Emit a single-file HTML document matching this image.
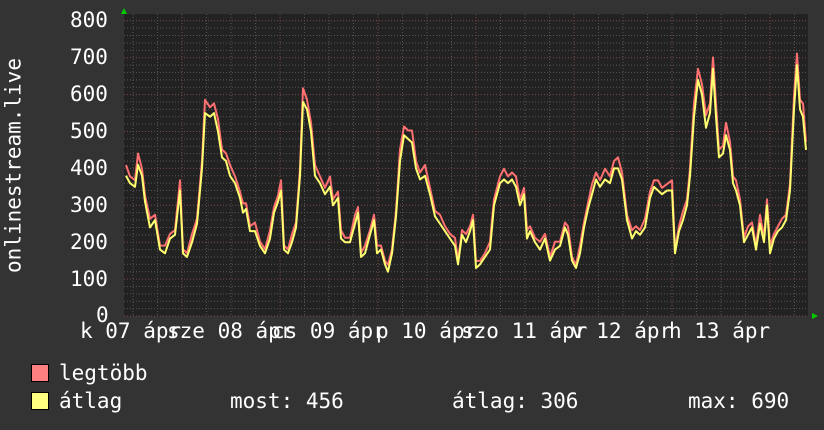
<!DOCTYPE html>
<html><head><meta charset="utf-8"><style>
body{margin:0;background:#333;width:824px;height:430px;overflow:hidden;position:relative;font-family:"DejaVu Sans Mono","Liberation Mono",monospace;color:#fff}
.t{position:absolute;font-size:21px;line-height:21px;white-space:pre}
.sq{position:absolute;width:16px;height:16px;border:1px solid #000}
</style></head><body>
<svg id="g" width="824" height="430" style="position:absolute;left:0;top:0"></svg>
<div class="t" style="left:70px;top:10px">800</div>
<div class="t" style="left:70px;top:47px">700</div>
<div class="t" style="left:70px;top:84px">600</div>
<div class="t" style="left:70px;top:121px">500</div>
<div class="t" style="left:70px;top:158px">400</div>
<div class="t" style="left:70px;top:195px">300</div>
<div class="t" style="left:70px;top:232px">200</div>
<div class="t" style="left:70px;top:269px">100</div>
<div class="t" style="left:96px;top:305px">0</div>
<div class="t" style="left:-75px;top:155px;transform:rotate(-90deg);width:180px;text-align:center;top:155px;margin-top:0"></div>
<div class="t" style="left:-96px;top:155px;transform:rotate(-90deg);width:220px;text-align:center">onlinestream.live</div>
<div class="t" style="left:80px;top:321px">k 07 ápr</div>
<div class="t" style="left:167px;top:321px">sze 08 ápr</div>
<div class="t" style="left:272px;top:321px">cs 09 ápr</div>
<div class="t" style="left:376px;top:321px">p 10 ápr</div>
<div class="t" style="left:461px;top:321px">szo 11 ápr</div>
<div class="t" style="left:571px;top:321px">v 12 ápr</div>
<div class="t" style="left:669px;top:321px">h 13 ápr</div>
<div class="sq" style="left:31px;top:364px;background:#ff8080"></div>
<div class="sq" style="left:31px;top:392px;background:#ffff80"></div>
<div class="t" style="left:59px;top:363px">legtöbb</div>
<div class="t" style="left:59px;top:391px">átlag</div>
<div class="t" style="left:230px;top:391px">most: 456</div>
<div class="t" style="left:452px;top:391px">átlag: 306</div>
<div class="t" style="left:688px;top:391px">max: 690</div>
<script>
var s='',X0=124,X1=808,Y0=14,Y1=316;
s+='<rect x="'+X0+'" y="'+Y0+'" width="'+(X1-X0)+'" height="'+(Y1-Y0)+'" fill="#222"/>';
for(var v=0;v<=800;v+=20){var y=Y1-v*0.369;s+='<line x1="'+X0+'" x2="'+X1+'" y1="'+y+'" y2="'+y+'" stroke="'+(v%100?'#555':'#7a4a4a')+'" stroke-dasharray="1 2"/>';}
for(var x=133;x<X1;x+=24.5){s+='<line x1="'+x+'" x2="'+x+'" y1="'+Y0+'" y2="'+Y1+'" stroke="#555" stroke-dasharray="1 2"/>';}
for(var x=182;x<X1;x+=98){s+='<line x1="'+x+'" x2="'+x+'" y1="'+Y0+'" y2="'+Y1+'" stroke="#7a4a4a" stroke-dasharray="1 2"/>';}
var d=[126,380,130,360,135,350,138,410,142,380,145,310,150,240,155,260,160,180,165,170,170,210,175,220,180,340,183,170,187,160,192,200,197,250,202,400,205,550,210,540,214,550,218,500,222,430,226,420,230,380,235,360,240,320,243,280,246,290,250,230,255,230,260,190,265,170,270,210,274,280,278,310,281,340,284,180,288,170,292,200,296,240,300,380,303,580,307,560,311,500,315,380,320,360,325,330,330,350,333,300,338,320,341,210,345,200,350,200,355,250,358,280,361,160,365,170,370,220,374,260,377,170,381,180,385,140,388,120,392,170,396,270,400,420,404,490,408,480,412,470,416,400,420,370,425,380,430,330,435,270,440,250,445,230,450,210,455,190,458,140,462,220,466,200,470,230,473,260,476,130,480,140,485,160,490,180,494,300,500,360,504,370,508,360,512,370,516,350,520,300,524,330,527,210,530,230,535,200,540,180,545,210,550,150,555,180,560,190,565,240,568,220,572,150,576,130,580,170,584,240,588,290,592,330,596,370,600,350,605,370,610,360,614,400,618,400,622,370,627,260,632,210,636,230,640,220,645,240,650,320,654,350,658,340,662,330,667,340,672,340,675,170,679,230,683,260,687,300,690,380,694,540,698,640,702,600,706,510,710,550,713,670,716,540,719,430,723,440,726,490,730,450,733,360,736,340,740,300,744,200,748,220,752,240,756,180,760,250,764,200,767,300,770,170,774,210,778,230,782,240,786,260,790,340,794,560,797,680,800,560,803,540,806,450];
var r='',yy='';
for(var i=0;i<d.length;i+=2){var v=d[i+1];var rv=v*1.04+4+((i/2)%3==0?10:0);r+=d[i]+','+(Y1-rv*0.369)+' ';yy+=d[i]+','+(Y1-v*0.369)+' ';}
s+='<polyline points="'+r+'" fill="none" stroke="#ff7070" stroke-width="2" stroke-linejoin="round"/>';
s+='<polyline points="'+yy+'" fill="none" stroke="#ffff70" stroke-width="2" stroke-linejoin="round"/>';
s+='<polygon points="121,14 127,14 124,8" fill="#0c0"/><polygon points="812,313 812,319 818,316" fill="#0c0"/>';
document.getElementById('g').innerHTML=s;
</script>
</body></html>
